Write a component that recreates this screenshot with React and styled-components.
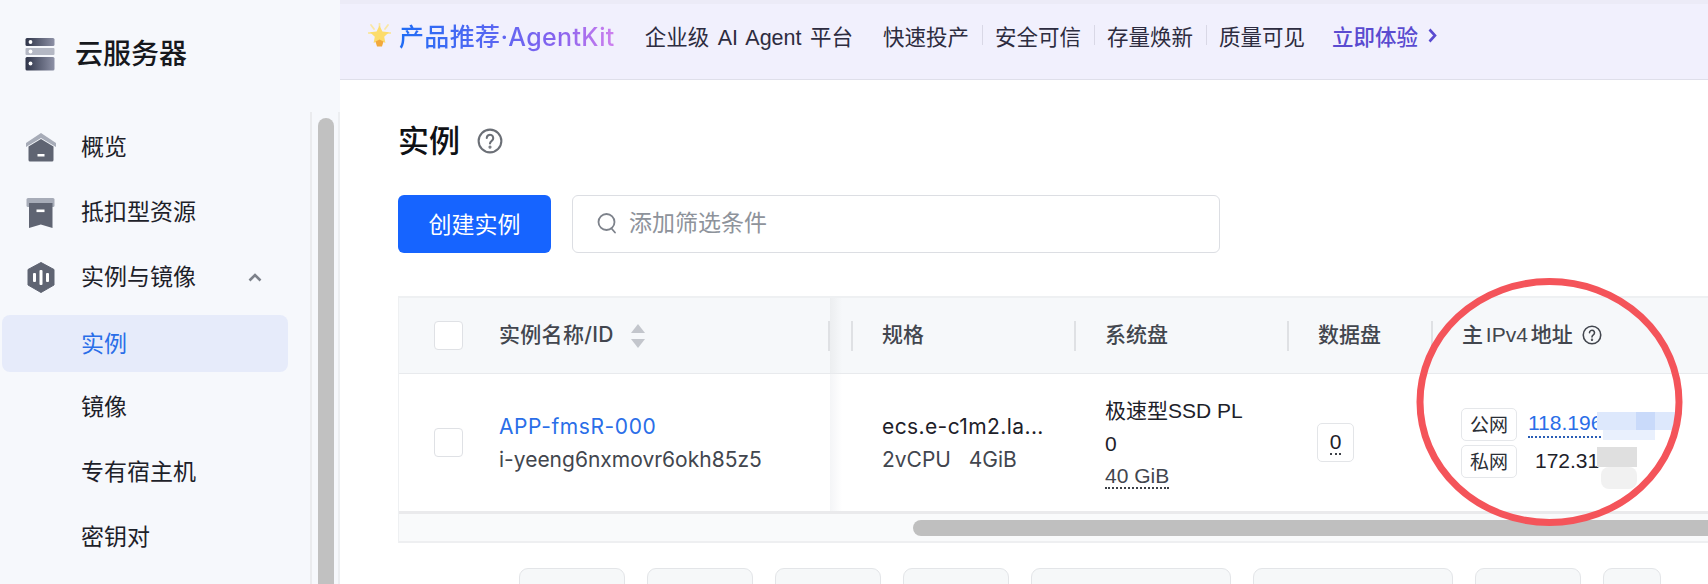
import React from "react";
import styled, { createGlobalStyle } from "styled-components";

const GlobalStyle = createGlobalStyle`
  html, body {
    margin: 0;
    padding: 0;
    background: #fff;
  }
  * {
    box-sizing: border-box;
  }
  body {
    font-family: "Liberation Sans", "Noto Sans CJK SC", sans-serif;
    color: #1d2129;
  }
`;

const Page = styled.div`
  display: flex;
  width: 1708px;
  height: 584px;
  overflow: hidden;
  position: relative;
`;

/* sidebar */
const Sidebar = styled.aside`
  width: 340px;
  flex: none;
  display: flex;
  flex-direction: column;
  background: #f6f8fc;
`;
const Brand = styled.div`
  height: 112px;
  flex: none;
  display: flex;
  align-items: center;
  padding: 0 0 3px 25px;
  gap: 20px;
`;
const BrandName = styled.span`
  font-size: 28px;
  font-weight: 500;
  color: #16181d;
  padding-bottom: 5px;
`;
const SideBody = styled.div`
  flex: 1;
  display: flex;
  min-height: 0;
`;
const Menu = styled.nav`
  width: 312px;
  flex: none;
  border-right: 2px solid #eaebee;
  padding: 3px 22px 0 2px;
  display: flex;
  flex-direction: column;
`;
const MenuItem = styled.a`
  height: 65px;
  flex: none;
  display: flex;
  align-items: center;
  font-size: 23px;
  color: #1d2129;
  padding-left: ${props => (props.$icon ? "24px" : "79px")};
  gap: 25px;
`;
const ActiveItem = styled(MenuItem)`
  color: #2a6ee8;
  height: 57px;
  margin: 5px 0 3px;
  background: #e6ebfa;
  border-radius: 8px;
`;
const MenuLabel = styled.span`
  padding-bottom: ${props => props.$lift || 6}px;
`;
const IconBox = styled.span`
  width: 30px;
  height: 30px;
  flex: none;
  display: flex;
  align-items: center;
  justify-content: center;
`;
const Caret = styled.svg`
  width: 14px;
  height: 9px;
  margin-left: 27px;
`;
const Gutter = styled.div`
  flex: 1;
  padding: 6px 4px 0 6px;
  border-right: 2px solid #eceef1;
`;
const Thumb = styled.div`
  width: 16px;
  height: 100%;
  background: #c1c1c1;
  border-radius: 8px 8px 0 0;
`;

/* main column */
const Main = styled.main`
  flex: 1;
  min-width: 0;
  display: flex;
  flex-direction: column;
`;
const Banner = styled.div`
  height: 80px;
  flex: none;
  display: flex;
  align-items: center;
  padding: 0 0 13px 28px;
  background: #f1f0fd;
  border-top: 4px solid #ecebf7;
  border-bottom: 1px solid #dfdfea;
`;
const Headline = styled.span`
  margin-left: 8px;
  font-family: Inter, "Noto Sans CJK SC", sans-serif;
  font-size: 25px;
  letter-spacing: 0.35px;
  font-weight: 500;
  background: linear-gradient(90deg, #1f6cf5 0%, #5a66f2 45%, #8a63ee 75%, #cf80ee 100%);
  -webkit-background-clip: text;
  background-clip: text;
  color: transparent;
  white-space: nowrap;
`;
const Slogan = styled.span`
  margin-left: 30px;
  font-size: 21.5px;
  word-spacing: 2.5px;
  color: #2d2c40;
  white-space: nowrap;
`;
const Feature = styled.span`
  font-size: 21.5px;
  color: #2d2c40;
  white-space: nowrap;
  margin-left: ${props => (props.$first ? "30px" : "0")};
`;
const FeatureRule = styled.span`
  width: 1px;
  height: 20px;
  background: #d9d8e6;
  margin: 0 12px 0 13px;
`;
const TryLink = styled.a`
  margin-left: 27px;
  font-size: 21.5px;
  font-weight: 500;
  color: #5a4bd0;
  display: flex;
  align-items: center;
  gap: 10px;
`;

const Content = styled.div`
  flex: 1;
  min-height: 0;
  padding: 41px 0 0 58px;
`;
const TitleRow = styled.div`
  display: flex;
  align-items: center;
  height: 40px;
  gap: 17px;
`;
const Title = styled.h1`
  margin: 0;
  padding-bottom: 6px;
  font-size: 31px;
  font-weight: 500;
  color: #0f1115;
`;
const Toolbar = styled.div`
  display: flex;
  gap: 21px;
  margin-top: 34px;
`;
const PrimaryButton = styled.button`
  width: 153px;
  height: 58px;
  border: 0;
  border-radius: 6px;
  padding: 0 0 3px;
  background: #1664ff;
  color: #fff;
  font: inherit;
  font-size: 23px;
`;
const SearchBox = styled.div`
  width: 648px;
  height: 58px;
  border: 1px solid #dcdee3;
  border-radius: 6px;
  display: flex;
  align-items: center;
  padding: 0 0 2px 24px;
  gap: 12px;
  font-size: 23px;
  color: #8e939b;
`;
const SearchText = styled.span`
  padding-bottom: 5px;
`;

/* table */
const Table = styled.div`
  margin-top: 43px;
  border-top: 2px solid #eef0f2;
  border-left: 1px solid #eef0f2;
`;
const HeadRow = styled.div`
  display: grid;
  grid-template-columns: 431px 22px 223px 213px 144px 1fr;
  height: 76px;
  background: #f6f8fa;
  border-bottom: 1px solid #e8eaed;
`;
const BodyRow = styled.div`
  display: grid;
  grid-template-columns: 431px 22px 223px 213px 144px 1fr;
  height: 140px;
  border-bottom: 3px solid #eaeaec;
`;
const NameCell = styled.div`
  display: flex;
  align-items: center;
  padding-left: 35px;
  gap: 36px;
`;
const FixShadow = styled.div`
  background: linear-gradient(90deg, ${props => (props.$head ? "#eceef0" : "#f4f5f7")} 0%, rgba(246, 248, 250, 0) 55%);
`;
const HeadCell = styled.div`
  display: flex;
  align-items: center;
  font-size: 21px;
  font-weight: 500;
  color: #42464e;
`;
const HeadLabel = styled.span`
  padding-bottom: 5px;
  white-space: nowrap;
  word-spacing: ${props => props.$tight || 0}px;
`;
const NameLabel = styled(HeadLabel)`
  font-family: Inter, "Noto Sans CJK SC", sans-serif;
  font-size: 21px;
  letter-spacing: 0.3px;
`;
const ColRule = styled.span`
  width: 2px;
  height: 30px;
  flex: none;
  background: #dfe1e4;
  margin: 0 29px 0 -1px;
`;
const EdgeRule = styled(ColRule)`
  margin: 0 0 0 auto;
`;
const CheckBox = styled.span`
  width: 29px;
  height: 29px;
  flex: none;
  background: #fff;
  border: 1px solid #dfe1e5;
  border-radius: 4px;
`;
const SortIcon = styled.svg`
  width: 14px;
  height: 24px;
  margin-left: 17px;
`;
const HelpSlot = styled.span`
  display: flex;
  margin: 0 0 1px 9px;
`;
const Lines = styled.div`
  display: flex;
  flex-direction: column;
  justify-content: center;
  font-family: ${props => (props.$wide ? 'Inter, "Noto Sans CJK SC", sans-serif' : "inherit")};
  font-size: 21px;
  line-height: 33px;
  padding-left: ${props => props.$pad || 0}px;
  padding-bottom: ${props => props.$lift || 0}px;
  color: #1d2129;
`;
const Link = styled.span`
  color: #2a6ee8;
  letter-spacing: 0.6px;
`;
const Spec = styled.span`
  letter-spacing: 0.4px;
  white-space: nowrap;
`;
const Muted = styled.span`
  color: #42464e;
  white-space: nowrap;
`;
const Dotted = styled.span`
  align-self: flex-start;
  margin-top: 4px;
  border-bottom: 2px dotted #3d4148;
  line-height: 23px;
  color: #42464e;
`;
const Badge = styled.span`
  width: 37px;
  height: 39px;
  margin-left: 29px;
  align-self: center;
  border: 1px solid #e3e5e8;
  border-radius: 5px;
  display: flex;
  align-items: center;
  justify-content: center;
  font-size: 21px;
`;
const BadgeValue = styled.span`
  border-bottom: 2px dotted #3d4148;
  line-height: 23px;
`;
const IpCell = styled.div`
  padding-left: 29px;
  display: flex;
  flex-direction: column;
  justify-content: center;
  gap: 4px;
`;
const IpRow = styled.div`
  display: flex;
  align-items: center;
  height: 33px;
  font-size: 21px;
  position: relative;
`;
const IpTag = styled.span`
  width: 56px;
  height: 33px;
  flex: none;
  border: 1px solid #e5e7ea;
  border-radius: 5px;
  display: flex;
  align-items: center;
  justify-content: center;
  padding-bottom: 2px;
  font-size: 19px;
  color: #2b2f36;
`;
const PublicIp = styled.span`
  margin-left: 11px;
  width: 77px;
  color: #2a6ee8;
  line-height: 26px;
  border-bottom: 2px dotted #2a5db5;
  white-space: nowrap;
`;
const PrivateIp = styled.span`
  margin-left: 18px;
  color: #1d2129;
  white-space: nowrap;
`;
const Smudge = styled.svg`
  position: absolute;
  left: 136px;
  top: ${props => props.$top}px;
`;

const ScrollTrack = styled.div`
  height: 29px;
  background: #f9fafb;
  border-bottom: 2px solid #eeeff1;
  padding: 6px 0 0 514px;
`;
const ScrollThumb = styled.div`
  height: 16px;
  background: #bfbfbf;
  border-radius: 8px 0 0 8px;
`;

const Pager = styled.div`
  display: flex;
  gap: 22px;
  margin: 25px 0 0 121px;
`;
const PagerItem = styled.span`
  width: ${props => props.$w}px;
  height: 40px;
  flex: none;
  background: #f6f8f9;
  border: 1px solid #e3e5e8;
  border-radius: 9px;
`;

/* red marker drawn over the screenshot */
const Marker = styled.svg`
  position: absolute;
  left: 1416px;
  top: 278px;
  pointer-events: none;
`;

const ServerIcon = () => (
  <svg width="30" height="33" viewBox="0 0 30 33">
    <defs>
      <linearGradient id="srv" x1="0" x2="1" y1="0" y2="0">
        <stop offset="0" stopColor="#2f3549" />
        <stop offset="1" stopColor="#8d91a6" />
      </linearGradient>
    </defs>
    <rect x="0.5" y="0" width="29" height="8" rx="1.5" fill="url(#srv)" />
    <rect x="0.5" y="10" width="29" height="7" rx="1" fill="#b4b8c4" />
    <rect x="0.5" y="19" width="29" height="13.5" rx="1.5" fill="url(#srv)" />
    <circle cx="5.5" cy="4" r="1.9" fill="#fff" />
    <circle cx="5.5" cy="13.5" r="1.9" fill="#fff" />
    <circle cx="5.5" cy="25.5" r="1.9" fill="#fff" />
  </svg>
);

const HomeIcon = () => (
  <svg width="30" height="29" viewBox="0 0 30 29">
    <path d="M15 0 L30 10 V14 L15 5 L0 14 V10 Z" fill="#a7acb8" />
    <path d="M15 6 L27.5 13.5 V27 a1.5 1.5 0 0 1 -1.5 1.5 H4 a1.5 1.5 0 0 1 -1.5 -1.5 V13.5 Z" fill="#5f6472" />
    <rect x="11.5" y="21" width="7" height="2.5" fill="#fff" />
  </svg>
);

const BoxIcon = () => (
  <svg width="30" height="30" viewBox="0 0 30 30">
    <rect x="0.5" y="0" width="28" height="9" rx="1.5" fill="#a7acb8" />
    <path d="M3 5 H26.5 V30 L14.8 26.5 L3 30 Z" fill="#5f6472" />
    <rect x="10.5" y="11.5" width="8" height="2.6" fill="#fff" />
  </svg>
);

const HexIcon = () => (
  <svg width="28" height="31" viewBox="0 0 28 31">
    <path d="M14 0.5 L27 7.5 V23 L14 30.5 L1 23 V7.5 Z" fill="#5f6472" stroke="#5f6472" strokeLinejoin="round" />
    <rect x="6" y="11" width="3" height="9" rx="1" fill="#fff" />
    <rect x="12.5" y="8" width="3" height="15" rx="1" fill="#fff" />
    <rect x="19" y="11" width="3" height="9" rx="1" fill="#fff" />
  </svg>
);

const HelpIcon = ({ size, color, width }) => (
  <svg width={size} height={size} viewBox="0 0 24 24" fill="none" stroke={color} strokeWidth={width} strokeLinecap="round">
    <circle cx="12" cy="12" r="10.5" />
    <path d="M9 9.3a3 3 0 1 1 4.6 2.5c-1 .7-1.6 1.3-1.6 2.5" />
    <circle cx="12" cy="17.6" r="0.5" fill={color} />
  </svg>
);

const StarIcon = () => (
  <svg width="23" height="24" viewBox="0 0 23 24">
    <path d="M11.5 0.5 V4 M3 2 L6 6 M20 2 L17 6 M0.5 10 H3.5 M22.5 10 H19.5" stroke="#f9e7a6" strokeWidth="1.8" strokeLinecap="round" />
    <path d="M11.5 2.5 L14.4 8.4 L21 9.3 L16.2 13.8 L17.4 20 L11.5 16.9 L5.6 20 L6.8 13.8 L2 9.3 L8.6 8.4 Z" fill="#fcdc6c" />
    <path d="M7.5 18.5 L11.5 16.5 L15.5 18.5 L14 23.5 H9 Z" fill="#f2a93b" />
  </svg>
);

const SearchIcon = () => (
  <svg width="20" height="22" viewBox="0 0 20 22" fill="none" stroke="#7d828b" strokeWidth="1.8" strokeLinecap="round">
    <circle cx="9.5" cy="10" r="8" />
    <path d="M14.5 16.5 L18 20.5" />
  </svg>
);

const menu = ["镜像", "专有宿主机", "密钥对"];
const pagerWidths = [106, 106, 106, 106, 200, 200, 106, 58];
const features = ["安全可信", "存量焕新", "质量可见"];

const App = () => (
  <Page>
    <GlobalStyle />
    <Sidebar>
      <Brand>
        <ServerIcon />
        <BrandName>云服务器</BrandName>
      </Brand>
      <SideBody>
        <Menu>
          <MenuItem $icon>
            <IconBox><HomeIcon /></IconBox>
            <MenuLabel>概览</MenuLabel>
          </MenuItem>
          <MenuItem $icon>
            <IconBox><BoxIcon /></IconBox>
            <MenuLabel>抵扣型资源</MenuLabel>
          </MenuItem>
          <MenuItem $icon>
            <IconBox><HexIcon /></IconBox>
            <MenuLabel>实例与镜像</MenuLabel>
            <Caret viewBox="0 0 14 9" fill="none" stroke="#7c818a" strokeWidth="2.6">
              <path d="M1.5 7.5 L7 2 L12.5 7.5" />
            </Caret>
          </MenuItem>
          <ActiveItem>
            <MenuLabel $lift={4}>实例</MenuLabel>
          </ActiveItem>
          {menu.map(item => (
            <MenuItem key={item}>
              <MenuLabel>{item}</MenuLabel>
            </MenuItem>
          ))}
        </Menu>
        <Gutter>
          <Thumb />
        </Gutter>
      </SideBody>
    </Sidebar>

    <Main>
      <Banner>
        <StarIcon />
        <Headline>产品推荐·AgentKit</Headline>
        <Slogan>企业级 AI Agent 平台</Slogan>
        <Feature $first>快速投产</Feature>
        {features.map(item => (
          <React.Fragment key={item}>
            <FeatureRule />
            <Feature>{item}</Feature>
          </React.Fragment>
        ))}
        <TryLink>
          立即体验
          <svg width="9" height="15" viewBox="0 0 9 15" fill="none" stroke="#5a4bd0" strokeWidth="2.6">
            <path d="M1.5 1.5 L7 7.5 L1.5 13.5" />
          </svg>
        </TryLink>
      </Banner>

      <Content>
        <TitleRow>
          <Title>实例</Title>
          <HelpIcon size={26} color="#6b6f76" width={1.9} />
        </TitleRow>
        <Toolbar>
          <PrimaryButton>创建实例</PrimaryButton>
          <SearchBox>
            <SearchIcon />
            <SearchText>添加筛选条件</SearchText>
          </SearchBox>
        </Toolbar>

        <Table>
          <HeadRow>
            <NameCell>
              <CheckBox />
              <HeadCell>
                <NameLabel>实例名称/ID</NameLabel>
                <SortIcon viewBox="0 0 14 24">
                  <path d="M7 0 L14 9 H0 Z" fill="#c3c6cc" />
                  <path d="M7 24 L14 15 H0 Z" fill="#c3c6cc" />
                </SortIcon>
              </HeadCell>
              <EdgeRule />
            </NameCell>
            <FixShadow $head />
            <HeadCell><ColRule /><HeadLabel>规格</HeadLabel></HeadCell>
            <HeadCell><ColRule /><HeadLabel>系统盘</HeadLabel></HeadCell>
            <HeadCell><ColRule /><HeadLabel>数据盘</HeadLabel></HeadCell>
            <HeadCell>
              <ColRule />
              <HeadLabel $tight={-3}>主 IPv4 地址</HeadLabel>
              <HelpSlot>
                <HelpIcon size={20} color="#42464e" width={1.9} />
              </HelpSlot>
            </HeadCell>
          </HeadRow>
          <BodyRow>
            <NameCell>
              <CheckBox />
              <Lines $wide>
                <Link>APP-fmsR-000</Link>
                <Muted>i-yeeng6nxmovr6okh85z5</Muted>
              </Lines>
            </NameCell>
            <FixShadow />
            <Lines $pad={30} $wide>
              <Spec>ecs.e-c1m2.la...</Spec>
              <Muted>2vCPU&nbsp;&nbsp;&nbsp;4GiB</Muted>
            </Lines>
            <Lines $pad={30} $lift={3}>
              <span>极速型SSD PL</span>
              <span>0</span>
              <Dotted>40 GiB</Dotted>
            </Lines>
            <Badge>
              <BadgeValue>0</BadgeValue>
            </Badge>
            <IpCell>
              <IpRow>
                <IpTag>公网</IpTag>
                <PublicIp>118.196</PublicIp>
                <Smudge $top={4} width="78" height="30" viewBox="0 0 78 30">
                  <rect x="0" y="0" width="78" height="18" fill="#dde8fc" />
                  <rect x="39" y="0" width="19" height="18" fill="#c9dafa" />
                  <rect x="6" y="18" width="52" height="10" fill="#e9f0fd" />
                </Smudge>
              </IpRow>
              <IpRow>
                <IpTag>私网</IpTag>
                <PrivateIp>172.31</PrivateIp>
                <Smudge $top={2} width="40" height="44" viewBox="0 0 40 44">
                  <rect x="0" y="0" width="40" height="20" fill="#dfdfdf" />
                  <rect x="4" y="20" width="36" height="22" rx="8" fill="#f1f1f1" />
                </Smudge>
              </IpRow>
            </IpCell>
          </BodyRow>
          <ScrollTrack>
            <ScrollThumb />
          </ScrollTrack>
        </Table>

        <Pager>
          {pagerWidths.map((w, i) => (
            <PagerItem key={i} $w={w} />
          ))}
        </Pager>
      </Content>
    </Main>

    <Marker width="267" height="248" viewBox="0 0 267 248" fill="none">
      <ellipse cx="133.5" cy="124" rx="129.5" ry="120.5" stroke="#f4545a" strokeWidth="7" />
    </Marker>
  </Page>
);

export default App;
